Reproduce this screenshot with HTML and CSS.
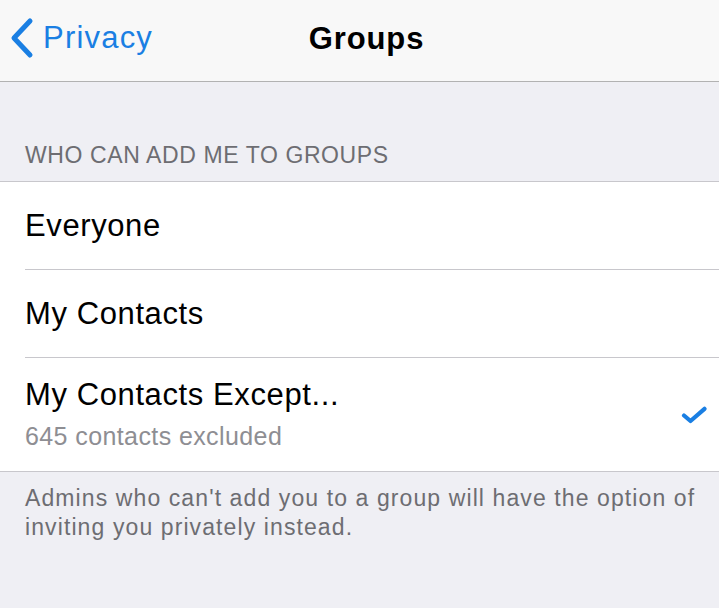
FILE: index.html
```html
<!DOCTYPE html>
<html lang="en">
<head>
    <meta charset="UTF-8">
    <meta name="viewport" content="width=device-width, initial-scale=1.0">
    <title>Groups</title>
    <link rel="stylesheet" href="styles.css">
</head>
<body>
    <div class="navbar">
        <a href="#" class="back">
            <svg class="chevron" viewBox="0 0 26 42" width="26" height="42">
                <path d="M21 4 L5 21 L21 38" fill="none" stroke="#1a7fe3" stroke-width="5" stroke-linecap="round" stroke-linejoin="round"/>
            </svg>
            <span>Privacy</span>
        </a>
        <h1 class="title">Groups</h1>
    </div>

    <div class="section">
        <div class="section-header">WHO CAN ADD ME TO GROUPS</div>
        <div class="list">
            <div class="row">
                <div class="row-label">Everyone</div>
            </div>
            <div class="row">
                <div class="row-label">My Contacts</div>
            </div>
            <div class="row row-tall">
                <div class="row-text">
                    <div class="row-label">My Contacts Except...</div>
                    <div class="row-sub">645 contacts excluded</div>
                </div>
                <svg class="check" viewBox="0 0 26 18" width="26" height="18">
                    <path d="M3 9.5 L9.5 15 L23.5 2.8" fill="none" stroke="#1a7fe3" stroke-width="4.2" stroke-linecap="round" stroke-linejoin="round"/>
                </svg>
            </div>
        </div>
        <p class="section-footer">Admins who can't add you to a group will have the option of inviting you privately instead.</p>
    </div>
</body>
</html>
```

FILE: styles.css
```css
* {
    margin: 0;
    padding: 0;
    box-sizing: border-box;
    font-family: "Liberation Sans", Arial, sans-serif;
}

body {
    background-color: #efeff4;
    height: 100vh;
    overflow: hidden;
}

/* Navigation bar */
.navbar {
    height: 82px;
    background-color: #f8f8f8;
    border-bottom: 1px solid #b2b2b2;
    display: flex;
    align-items: center;
    justify-content: center;
    position: relative;
}

.back {
    position: absolute;
    left: 9px;
    top: 17px;
    display: flex;
    align-items: center;
    gap: 8px;
    text-decoration: none;
    color: #1a7fe3;
    font-size: 31px;
    letter-spacing: 1.2px;
}

.chevron {
    display: block;
}

.title {
    font-size: 31px;
    font-weight: bold;
    letter-spacing: 0.9px;
    color: #000;
    margin-left: 14px;
    margin-top: -3px;
}

/* Grouped list */
.section-header {
    padding: 59px 25px 12px;
    font-size: 23px;
    line-height: 28px;
    color: #6d6d72;
    letter-spacing: 0.6px;
}

.list {
    background-color: #fff;
    border-top: 1px solid #c8c7cc;
    border-bottom: 1px solid #c8c7cc;
}

.row {
    height: 88px;
    margin-left: 25px;
    padding-right: 12px;
    display: flex;
    align-items: center;
    justify-content: space-between;
    border-bottom: 1px solid #c8c7cc;
}

.row:last-child {
    border-bottom: none;
}

.row-tall {
    height: 113px;
}

.row-label {
    font-size: 31px;
    line-height: 38px;
    letter-spacing: 0.6px;
    color: #000;
}

.row-text {
    margin-top: -3px;
}

.row-sub {
    font-size: 25px;
    line-height: 30px;
    letter-spacing: 0.4px;
    color: #8e8e93;
    margin-top: 7px;
}

.check {
    display: block;
}

.section-footer {
    padding: 12px 14px 0 25px;
    font-size: 23px;
    line-height: 29px;
    letter-spacing: 1.1px;
    color: #6d6d72;
}
```
